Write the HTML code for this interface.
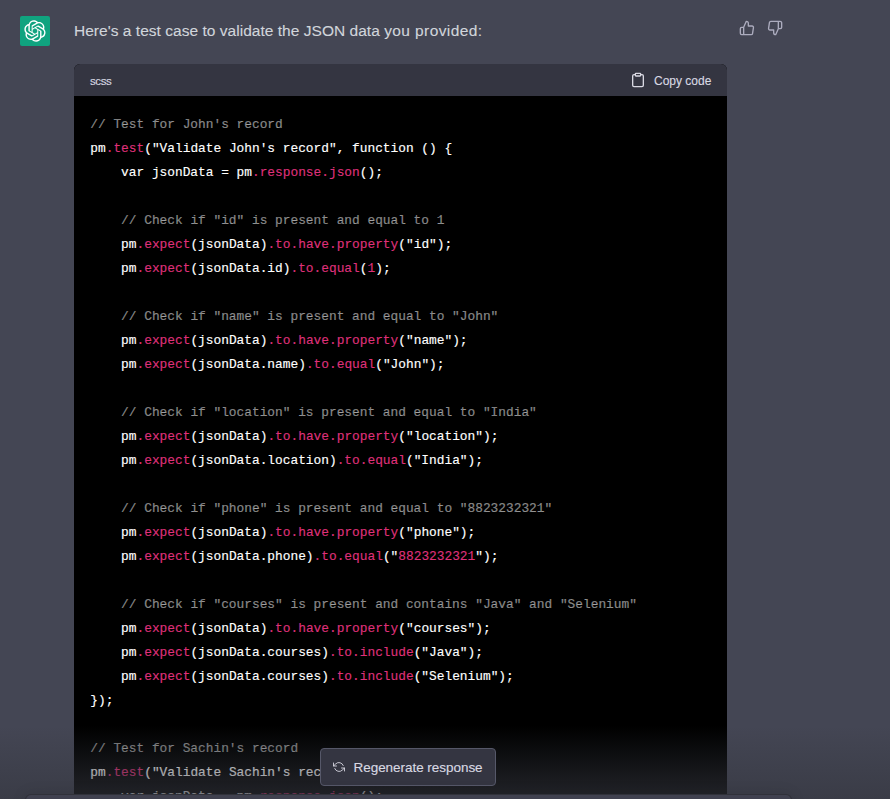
<!DOCTYPE html>
<html lang="en">
<head>
<meta charset="utf-8">
<title>Chat</title>
<style>
*{box-sizing:border-box;margin:0;padding:0}
html,body{width:890px;height:799px;overflow:hidden;background:#444654}
body{position:relative;-webkit-text-stroke:.12px;font-family:"Liberation Sans",sans-serif;color:#d1d5db}
.avatar{position:absolute;left:20px;top:16px;width:30px;height:30px;background:#10a37f;border-radius:2px;color:#fff}
.avatar svg{position:absolute;left:4px;top:4px;width:22px;height:22px}
.msg{position:absolute;left:74px;top:18.5px;font-size:15.5px;letter-spacing:.03px;line-height:24px;white-space:nowrap;color:#d1d5db}
.thumbs svg{position:absolute;top:20px;width:16px;height:16px;stroke:#acacbe;fill:none;stroke-width:2;stroke-linecap:round;stroke-linejoin:round}
.code{position:absolute;left:74px;top:64px;width:653px;height:800px;background:#000;border-radius:6px;overflow:hidden}
.chead{position:absolute;left:0;top:0;width:653px;height:32px;background:#343541;color:#d9d9e3;font-size:12px;line-height:16px}
.chead .lang{position:absolute;left:16px;top:8.5px;font-size:11.5px;letter-spacing:-.4px}
.chead svg{position:absolute;left:556px;top:8px;width:16px;height:16px;stroke:#d9d9e3;fill:none;stroke-width:2;stroke-linecap:round;stroke-linejoin:round}
.chead .copy{position:absolute;left:580px;top:9px;white-space:nowrap}
pre{position:absolute;left:16.3px;top:48.5px;font-family:"Liberation Mono",monospace;font-size:12.83px;line-height:24px;color:#fff;white-space:pre;-webkit-text-stroke:.15px}
.c{color:rgba(255,255,255,.5)}
.s{color:#df3079}
.fade{position:absolute;left:0;top:726px;width:890px;height:187px;background:linear-gradient(180deg,rgba(53,55,64,0),#353740 58.85%)}
.regen{position:absolute;left:320px;top:748px;width:176px;height:38px;background:#343541;border:1px solid #565869;border-radius:4px;color:#d9d9e3;font-size:13.5px;letter-spacing:-.04px;line-height:20px}
.regen svg{position:absolute;left:12px;top:12px;width:12px;height:12px;stroke:#d9d9e3;fill:none;stroke-width:1.75;stroke-linecap:round;stroke-linejoin:round}
.regen span{position:absolute;left:32.5px;top:9px;white-space:nowrap}
.input{position:absolute;left:25px;top:794px;width:767px;height:40px;background:#40414f;border:1px solid rgba(32,33,35,.5);border-radius:6px;box-shadow:0 0 15px rgba(0,0,0,.1)}
</style>
</head>
<body>
<div class="avatar"><svg viewBox="0 0 41 41" fill="none"><path d="M37.5324 16.8707C37.9808 15.5241 38.1363 14.0974 37.9886 12.6859C37.8409 11.2744 37.3934 9.91076 36.676 8.68622C35.6126 6.83404 33.9882 5.3676 32.0373 4.4985C30.0864 3.62941 27.9098 3.40259 25.8215 3.85078C24.8796 2.7893 23.7219 1.94125 22.4257 1.36341C21.1295 0.785575 19.7249 0.491269 18.3058 0.500197C16.1708 0.495044 14.0893 1.16803 12.3614 2.42214C10.6335 3.67624 9.34853 5.44666 8.6917 7.47815C7.30085 7.76286 5.98686 8.3414 4.8377 9.17505C3.68854 10.0087 2.73073 11.0782 2.02839 12.312C0.956464 14.1591 0.498905 16.2988 0.721698 18.4228C0.944492 20.5467 1.83612 22.5449 3.268 24.1293C2.81966 25.4759 2.66413 26.9026 2.81182 28.3141C2.95951 29.7256 3.40701 31.0892 4.12437 32.3138C5.18791 34.1659 6.8123 35.6322 8.76321 36.5013C10.7141 37.3704 12.8907 37.5973 14.9789 37.1492C15.9208 38.2107 17.0786 39.0587 18.3747 39.6366C19.6709 40.2144 21.0755 40.5087 22.4946 40.4998C24.6307 40.5054 26.7133 39.8321 28.4418 38.5772C30.1704 37.3223 31.4556 35.5506 32.1119 33.5179C33.5027 33.2332 34.8167 32.6547 35.9659 31.821C37.115 30.9874 38.0728 29.9178 38.7752 28.684C39.8458 26.8371 40.3023 24.6979 40.0789 22.5748C39.8556 20.4517 38.9639 18.4544 37.5324 16.8707ZM22.4978 37.8849C20.7443 37.8874 19.0459 37.2733 17.6994 36.1501C17.7601 36.117 17.8666 36.0586 17.936 36.0161L25.9004 31.4156C26.1003 31.3019 26.2663 31.137 26.3813 30.9378C26.4964 30.7386 26.5563 30.5124 26.5549 30.2825V19.0542L29.9213 20.998C29.9389 21.0068 29.9541 21.0198 29.9656 21.0359C29.977 21.052 29.9842 21.0707 29.9867 21.0902V30.3889C29.9842 32.375 29.1946 34.2791 27.7909 35.6841C26.3872 37.0892 24.4838 37.8806 22.4978 37.8849ZM6.39227 31.0064C5.51397 29.4888 5.19742 27.7107 5.49804 25.9832C5.55718 26.0187 5.66048 26.0818 5.73461 26.1244L13.699 30.7248C13.8975 30.8408 14.1233 30.902 14.3532 30.902C14.583 30.902 14.8088 30.8408 15.0073 30.7248L24.731 25.1103V28.9979C24.7321 29.0177 24.7283 29.0376 24.7199 29.0556C24.7115 29.0736 24.6988 29.0893 24.6829 29.1012L16.6317 33.7497C14.9096 34.7416 12.8643 35.0097 10.9447 34.4954C9.02506 33.9811 7.38785 32.7263 6.39227 31.0064ZM4.29707 13.6194C5.17156 12.0998 6.55279 10.9364 8.19885 10.3327C8.19885 10.4013 8.19491 10.5228 8.19491 10.6071V19.808C8.19351 20.0378 8.25334 20.2638 8.36823 20.4629C8.48312 20.6619 8.64893 20.8267 8.84863 20.9404L18.5723 26.5542L15.206 28.4979C15.1894 28.5089 15.1703 28.5155 15.1505 28.5173C15.1307 28.5191 15.1107 28.516 15.0924 28.5082L7.04046 23.8557C5.32135 22.8601 4.06716 21.2235 3.55289 19.3046C3.03862 17.3858 3.30624 15.3413 4.29707 13.6194ZM31.955 20.0556L22.2312 14.4411L25.5976 12.4981C25.6142 12.4872 25.6333 12.4805 25.6531 12.4787C25.6729 12.4769 25.6928 12.4801 25.7111 12.4879L33.7631 17.1364C34.9967 17.849 36.0017 18.8982 36.6606 20.1613C37.3194 21.4244 37.6047 22.849 37.4832 24.2684C37.3617 25.6878 36.8382 27.0432 35.9743 28.1759C35.1103 29.3086 33.9415 30.1717 32.6047 30.6641C32.6047 30.5947 32.6047 30.4733 32.6047 30.3889V21.188C32.6066 20.9586 32.5474 20.7328 32.4332 20.5338C32.319 20.3348 32.154 20.1698 31.955 20.0556ZM35.3055 15.0128C35.2464 14.9765 35.1431 14.9142 35.069 14.8717L27.1045 10.2712C26.906 10.1554 26.6803 10.0943 26.4504 10.0943C26.2206 10.0943 25.9948 10.1554 25.7963 10.2712L16.0726 15.8858V11.9982C16.0715 11.9783 16.0753 11.9585 16.0837 11.9405C16.0921 11.9225 16.1048 11.9068 16.1207 11.8949L24.1719 7.25025C25.4053 6.53903 26.8158 6.19376 28.2383 6.25482C29.6608 6.31589 31.0364 6.78077 32.2044 7.59508C33.3723 8.40939 34.2842 9.53945 34.8334 10.8531C35.3826 12.1667 35.5464 13.6095 35.3055 15.0128ZM14.2424 21.9419L10.8752 19.9981C10.8576 19.9893 10.8423 19.9763 10.8309 19.9602C10.8195 19.9441 10.8122 19.9254 10.8098 19.9058V10.6071C10.8107 9.18295 11.2173 7.78848 11.9819 6.58696C12.7466 5.38544 13.8377 4.42659 15.1275 3.82264C16.4173 3.21869 17.8524 2.99464 19.2649 3.1767C20.6775 3.35876 22.0089 3.93941 23.1034 4.85067C23.0427 4.88379 22.937 4.94215 22.8668 4.98473L14.9024 9.58517C14.7025 9.69878 14.5366 9.86356 14.4215 10.0626C14.3065 10.2616 14.2466 10.4877 14.2479 10.7175L14.2424 21.9419ZM16.071 17.9991L20.4018 15.4978L24.7325 17.9975V22.9985L20.4018 25.4983L16.071 22.9985V17.9991Z" fill="currentColor"/></svg></div>
<div class="msg">Here's a test case to validate the JSON data <span style="letter-spacing:.4px">you provided:</span></div>
<div class="thumbs">
<svg style="left:739px" viewBox="0 0 24 24"><path d="M14 9V5a3 3 0 0 0-3-3l-4 9v11h11.28a2 2 0 0 0 2-1.7l1.38-9a2 2 0 0 0-2-2.3zM7 22H4a2 2 0 0 1-2-2v-7a2 2 0 0 1 2-2h3"/></svg>
<svg style="left:767px" viewBox="0 0 24 24"><path d="M10 15v4a3 3 0 0 0 3 3l4-9V2H5.72a2 2 0 0 0-2 1.7l-1.38 9a2 2 0 0 0 2 2.3zm7-13h2.67A2.31 2.31 0 0 1 22 4v7a2.31 2.31 0 0 1-2.33 2H17"/></svg>
</div>
<div class="code">
<div class="chead"><span class="lang">scss</span><svg viewBox="0 0 24 24"><path d="M16 4h2a2 2 0 0 1 2 2v14a2 2 0 0 1-2 2H6a2 2 0 0 1-2-2V6a2 2 0 0 1 2-2h2"/><rect x="8" y="2" width="8" height="4" rx="1" ry="1"/></svg><span class="copy">Copy code</span></div>
<pre><span class="c">// Test for John's record</span>
pm<span class="s">.test</span>("Validate John's record", function () {
    var jsonData = pm<span class="s">.response</span><span class="s">.json</span>();

    <span class="c">// Check if "id" is present and equal to 1</span>
    pm<span class="s">.expect</span>(jsonData)<span class="s">.to</span><span class="s">.have</span><span class="s">.property</span>("id");
    pm<span class="s">.expect</span>(jsonData.id)<span class="s">.to</span><span class="s">.equal</span>(<span class="s">1</span>);

    <span class="c">// Check if "name" is present and equal to "John"</span>
    pm<span class="s">.expect</span>(jsonData)<span class="s">.to</span><span class="s">.have</span><span class="s">.property</span>("name");
    pm<span class="s">.expect</span>(jsonData.name)<span class="s">.to</span><span class="s">.equal</span>("John");

    <span class="c">// Check if "location" is present and equal to "India"</span>
    pm<span class="s">.expect</span>(jsonData)<span class="s">.to</span><span class="s">.have</span><span class="s">.property</span>("location");
    pm<span class="s">.expect</span>(jsonData.location)<span class="s">.to</span><span class="s">.equal</span>("India");

    <span class="c">// Check if "phone" is present and equal to "8823232321"</span>
    pm<span class="s">.expect</span>(jsonData)<span class="s">.to</span><span class="s">.have</span><span class="s">.property</span>("phone");
    pm<span class="s">.expect</span>(jsonData.phone)<span class="s">.to</span><span class="s">.equal</span>("<span class="s">8823232321</span>");

    <span class="c">// Check if "courses" is present and contains "Java" and "Selenium"</span>
    pm<span class="s">.expect</span>(jsonData)<span class="s">.to</span><span class="s">.have</span><span class="s">.property</span>("courses");
    pm<span class="s">.expect</span>(jsonData.courses)<span class="s">.to</span><span class="s">.include</span>("Java");
    pm<span class="s">.expect</span>(jsonData.courses)<span class="s">.to</span><span class="s">.include</span>("Selenium");
});

<span class="c">// Test for Sachin's record</span>
pm<span class="s">.test</span>("Validate Sachin's record", function () {
    var jsonData = pm<span class="s">.response</span><span class="s">.json</span>();
</pre>
</div>
<div class="fade"></div>
<div class="regen"><svg viewBox="0 0 24 24"><polyline points="1 4 1 10 7 10"/><polyline points="23 20 23 14 17 14"/><path d="M20.49 9A9 9 0 0 0 5.64 5.64L1 10m22 4l-4.64 4.36A9 9 0 0 1 3.51 15"/></svg><span>Regenerate response</span></div>
<div class="input"></div>
</body>
</html>
